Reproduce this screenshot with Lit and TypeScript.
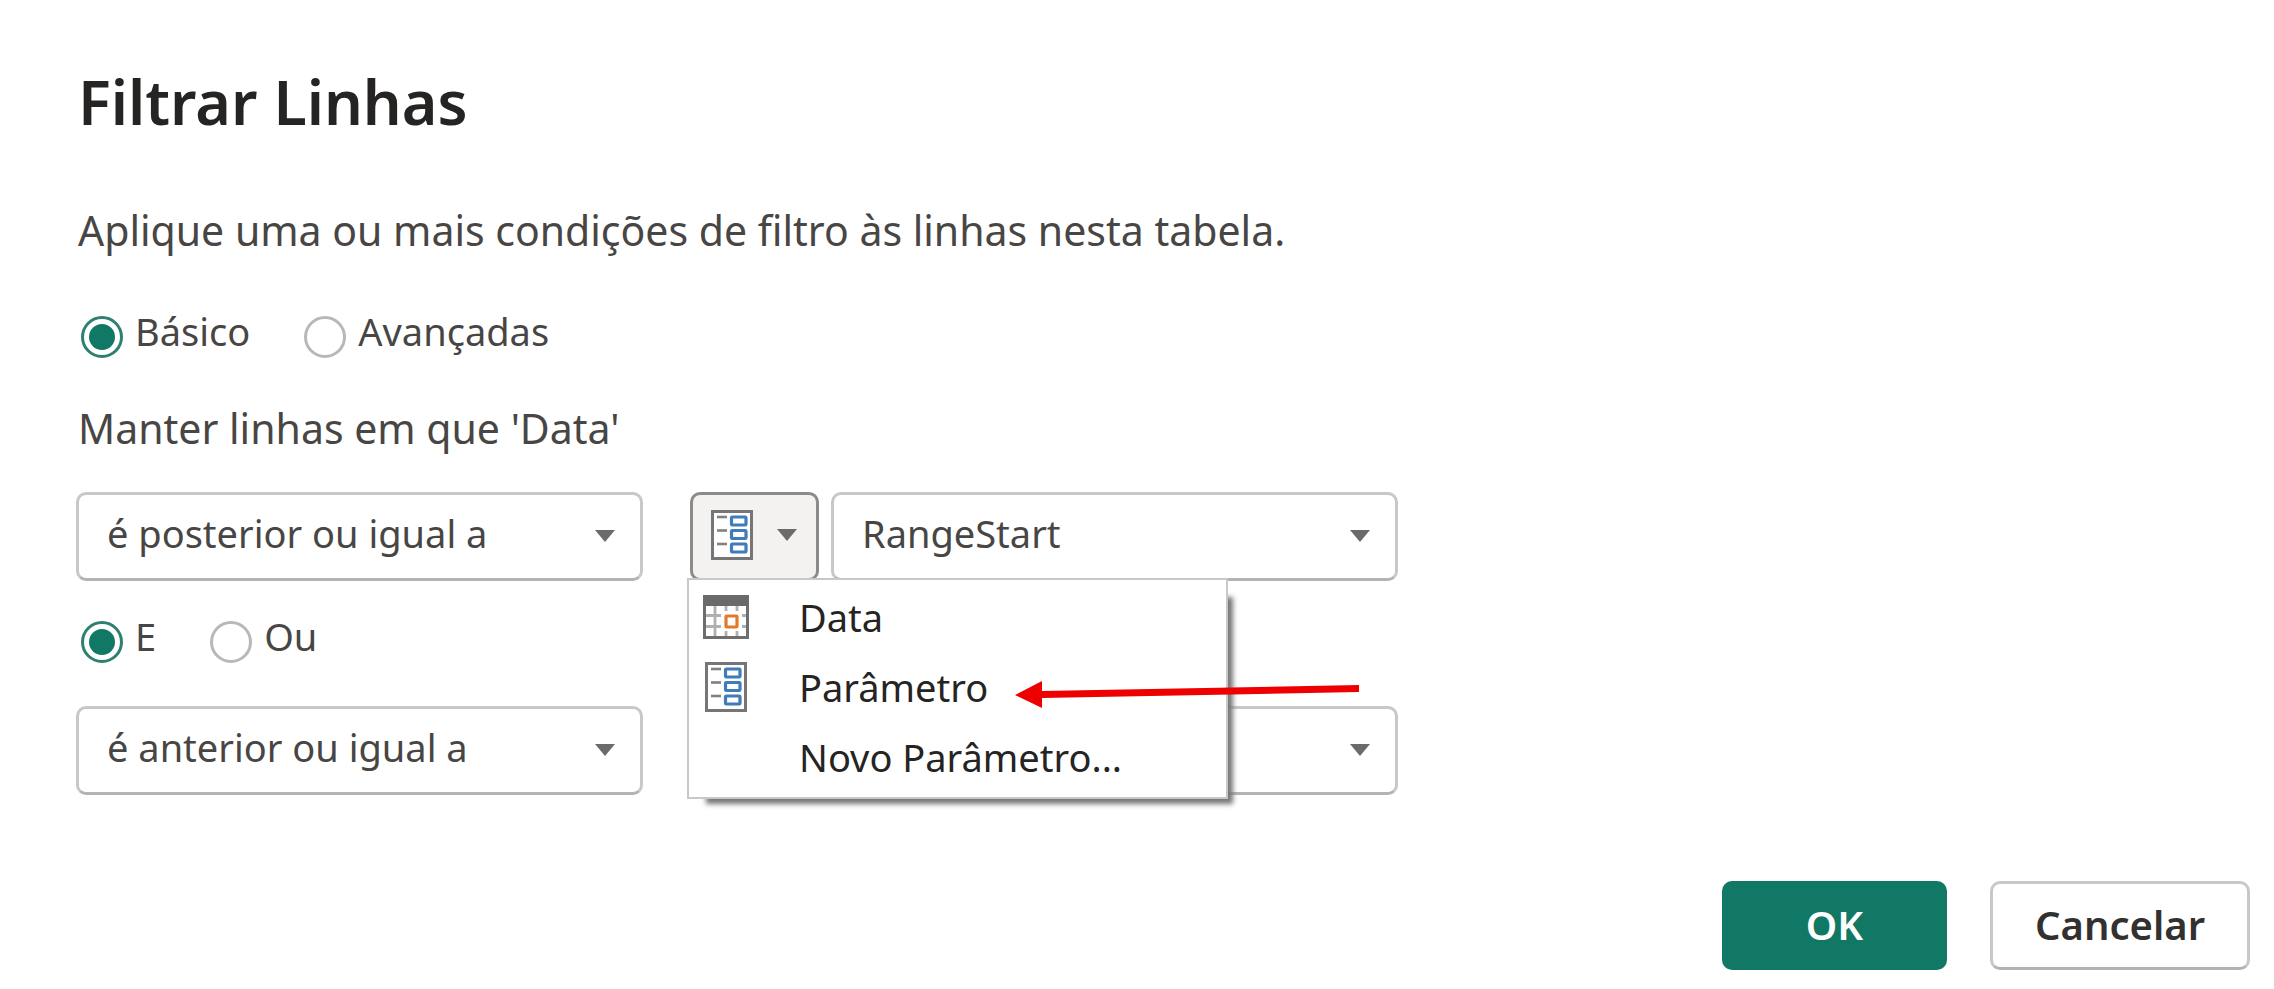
import { LitElement, html, css, svg } from "lit";
import { customElement, property, state } from "lit/decorators.js";

const parameterIcon = html`<svg class="icon" width="42" height="50" viewBox="0 0 42 50" aria-hidden="true">
  <rect x="1.5" y="1.5" width="39" height="47" fill="#fff" stroke="#767676" stroke-width="3" />
  ${[7, 20.5, 34].map(
    (y) => svg`<path d="M6 ${y}H16" stroke="#808080" stroke-width="2.6" />
      <rect x="20.5" y="${y}" width="14.5" height="8" rx="0.8" fill="#fff" stroke="#3f7cba" stroke-width="3.2" />`
  )}
</svg>`;

const calendarIcon = html`<svg class="icon" width="46" height="44" viewBox="0 0 46 44" aria-hidden="true">
  <rect x="1.5" y="1.5" width="43" height="41" fill="#fff" stroke="#6e6e6e" stroke-width="3" />
  <path d="M0 0H46V11H0Z" fill="#6a6a6a" />
  <path d="M12 11V41M3 20.5H18M3 31.5H18M39 20.5H43M39 31.5H43M23 11V16M34 11V16M23 36V41M34 36V41" stroke="#b0b0b0" stroke-width="2.8" />
  <rect x="23" y="21" width="11" height="11" rx="0.8" fill="#fff" stroke="#e07b2c" stroke-width="3.2" />
</svg>`;

const caret = html`<svg class="caret" width="20" height="12" viewBox="0 0 20 12" aria-hidden="true">
  <path d="M0 0H20L10 12Z" fill="#6b6b6b" />
</svg>`;

const base = css`
  *,
  *::before {
    box-sizing: border-box;
  }
  .caret {
    display: block;
    flex: none;
  }
`;

@customElement("drop-down")
class DropDown extends LitElement {
  @property({ type: Array }) options: string[] = [];
  @property() label = "";

  static styles = [
    base,
    css`
      :host {
        display: grid;
        align-items: center;
      }
      .field,
      .caret {
        grid-area: 1 / 1;
      }
      .field {
        appearance: none;
        width: 100%;
        height: 89px;
        margin: 0;
        padding: 0 72px 8px 28px;
        border: 3px solid #c8c8c8;
        border-bottom-color: #b3b3b3;
        border-radius: 10px;
        background: #fff;
        color: #484644;
        font: 38px/54px "Noto Sans", "Open Sans", sans-serif;
      }
      .caret {
        justify-self: end;
        margin: 0 28px 2px 0;
        pointer-events: none;
      }
    `,
  ];

  render() {
    return html`<select class="field" aria-label=${this.label}>
        ${this.options.map((o) => html`<option>${o}</option>`)}
      </select>
      ${caret}`;
  }
}

@customElement("radio-pair")
class RadioPair extends LitElement {
  @property({ type: Array }) options: string[] = [];
  @property() label = "";
  @state() private selected = 0;

  static styles = [
    base,
    css`
      :host {
        display: block;
      }
      .group {
        display: flex;
        gap: 54px;
        padding-left: 5px;
      }
      .choice {
        display: flex;
        align-items: flex-end;
        gap: 12px;
        color: #484644;
        font: 38px/54px "Noto Sans", "Open Sans", sans-serif;
      }
      .dot {
        appearance: none;
        display: grid;
        place-items: center;
        width: 42px;
        height: 42px;
        margin: 0;
        border: 3px solid #b8b8b8;
        border-radius: 50%;
        background: #fff;
      }
      .dot:checked {
        border-color: #2f8070;
      }
      .dot:checked::before {
        content: "";
        width: 26px;
        height: 26px;
        border-radius: 50%;
        background: #117865;
      }
    `,
  ];

  render() {
    return html`<div class="group" role="radiogroup" aria-label=${this.label}>
      ${this.options.map(
        (o, i) => html`<label class="choice">
          <input
            class="dot"
            type="radio"
            name="choice"
            .checked=${i === this.selected}
            @change=${() => (this.selected = i)}
          />${o}
        </label>`
      )}
    </div>`;
  }
}

@customElement("type-picker")
class TypePicker extends LitElement {
  @property({ type: Boolean }) open = false;

  static styles = [
    base,
    css`
      :host {
        display: block;
        position: relative;
      }
      .toggle {
        display: flex;
        align-items: center;
        justify-content: space-between;
        width: 100%;
        height: 89px;
        padding: 0 19px 4px 18px;
        border: 3px solid #8c8b8a;
        border-radius: 10px;
        background: #f3f2f1;
      }
      .menu {
        position: absolute;
        z-index: 1;
        top: 86px;
        left: -3px;
        width: 541px;
        padding: 2px 0 5px;
        border: 2px solid #c8c8c8;
        background: #fff;
        box-shadow: 12px 12px 5px -7px #777;
      }
      .item {
        display: grid;
        grid-template-columns: 74px 1fr;
        align-items: center;
        column-gap: 36px;
        width: 100%;
        height: 70px;
        padding: 0;
        border: 0;
        background: none;
        color: #252423;
        text-align: left;
        font: 38px/54px "Noto Sans", "Open Sans", sans-serif;
      }
      .glyph {
        display: grid;
        place-items: center;
      }
      .pointer {
        position: absolute;
        z-index: 2;
        top: 186px;
        left: 325px;
      }
    `,
  ];

  render() {
    const items = [
      { text: "Data", icon: calendarIcon },
      { text: "Parâmetro", icon: parameterIcon },
      { text: "Novo Parâmetro...", icon: null },
    ];
    return html`<button
        class="toggle"
        aria-label="Tipo de valor"
        aria-haspopup="menu"
        aria-expanded=${this.open}
        @click=${() => (this.open = !this.open)}
      >
        ${parameterIcon} ${caret}
      </button>
      ${this.open
        ? html`<div class="menu" role="menu">
              ${items.map(
                (i) => html`<button class="item" role="menuitem">
                  <span class="glyph">${i.icon}</span><span>${i.text}</span>
                </button>`
              )}
            </div>
            <svg class="pointer" width="345" height="32" viewBox="0 0 345 32" aria-hidden="true">
              <path d="M0 17L27 3V13L344 7V14L27 20V30Z" fill="#ee0000" />
            </svg>`
        : null}`;
  }
}

@customElement("app-root")
class AppRoot extends LitElement {
  static styles = [
    base,
    css`
      :host {
        display: block;
        min-height: 100vh;
        background: #fff;
        color: #484644;
        font-family: "Noto Sans", "Open Sans", sans-serif;
      }
      .dialog {
        padding: 62px 24px 18px 76px;
      }
      .title {
        margin: 0 0 58px;
        padding-left: 2px;
        color: #252423;
        font-size: 61px;
        line-height: 80px;
        font-weight: 600;
      }
      .text {
        margin: 0;
        padding-left: 2px;
        font-size: 41px;
        line-height: 60px;
      }
      .mode {
        margin: 44px 0 40px;
      }
      .conditions {
        display: grid;
        grid-template-columns: minmax(0, 602px) 129px minmax(0, 567px);
        column-gap: 12px;
        margin-top: 34px;
      }
      .operator {
        margin-right: 35px;
      }
      .joiner {
        grid-column: 1 / -1;
        margin: 28px 0 43px;
      }
      .actions {
        display: flex;
        justify-content: flex-end;
        gap: 43px;
        margin-top: 86px;
      }
      .action {
        height: 89px;
        min-width: 225px;
        padding: 0 42px 2px;
        border: 3px solid #c8c8c8;
        border-bottom-color: #b3b3b3;
        border-radius: 10px;
        background: #fff;
        color: #323130;
        font: 600 40px/54px "Noto Sans", "Open Sans", sans-serif;
      }
      .primary {
        border-color: #117865;
        background: #117865;
        color: #fff;
      }
    `,
  ];

  render() {
    return html`<main class="dialog">
      <h1 class="title">Filtrar Linhas</h1>
      <p class="text">Aplique uma ou mais condições de filtro às linhas nesta tabela.</p>
      <radio-pair class="mode" label="Modo" .options=${["Básico", "Avançadas"]}></radio-pair>
      <p class="text">Manter linhas em que 'Data'</p>
      <div class="conditions">
        <drop-down class="operator" label="Operador 1" .options=${["é posterior ou igual a"]}></drop-down>
        <type-picker open></type-picker>
        <drop-down label="Valor 1" .options=${["RangeStart"]}></drop-down>
        <radio-pair class="joiner" label="Conjunção" .options=${["E", "Ou"]}></radio-pair>
        <drop-down class="operator" label="Operador 2" .options=${["é anterior ou igual a"]}></drop-down>
        <type-picker></type-picker>
        <drop-down label="Valor 2" .options=${["RangeEnd"]}></drop-down>
      </div>
      <div class="actions">
        <button class="action primary">OK</button>
        <button class="action">Cancelar</button>
      </div>
    </main>`;
  }
}
